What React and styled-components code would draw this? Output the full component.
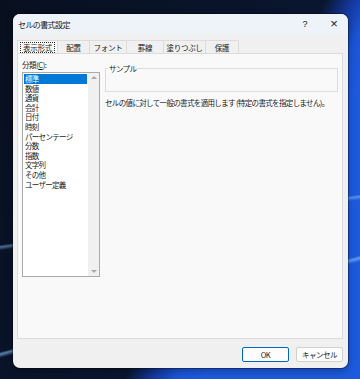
import styled, { createGlobalStyle } from 'styled-components';

const GlobalStyle = createGlobalStyle`
  html, body {
    margin: 0;
    padding: 0;
  }
  body {
    font-family: "Noto Sans CJK JP", "Noto Sans", sans-serif;
  }
`;

// wallpaper: blue base, dark navy laid over the top-left part
const Desktop = styled.div`
  width: 360px;
  height: 379px;
  box-sizing: border-box;
  padding: 14px 12px 11px 13px;
  overflow: hidden;
  background-color: #1d5ade;
  background-image:
    linear-gradient(165deg, transparent 74%, rgba(140, 200, 255, 0.6) 74.5%, transparent 75.3%),
    linear-gradient(172deg, transparent 57%, rgba(140, 200, 255, 0.5) 57.5%, transparent 58.3%),
    linear-gradient(118deg, #08101f 0%, #0a1630 58%, rgba(18, 48, 143, 0.8) 63%, rgba(24, 70, 196, 0.3) 67%, transparent 72%);
`;

const Dialog = styled.div`
  width: 335px;
  height: 354px;
  display: flex;
  flex-direction: column;
  background: #f0f0f0;
  border-radius: 7px;
  overflow: hidden;
  box-shadow: 0 0 0 1px rgba(0, 0, 0, 0.3), 0 3px 8px rgba(0, 0, 0, 0.3);
`;

const TitleBar = styled.div`
  height: 20px;
  flex: none;
  display: flex;
  align-items: center;
  padding: 0 0 0 5px;
  background: #eef2f9;
  color: #1a1a1a;
  font-size: 8px;
  letter-spacing: -0.6px;
`;

const Title = styled.span`
  flex: 1;
`;

const TitleButton = styled.span`
  width: ${p => p.$w}px;
  text-align: center;
  color: #222;
  font-family: "Liberation Sans", sans-serif;
  font-size: ${p => p.$size}px;
  line-height: 20px;
  letter-spacing: 0;
`;

const Body = styled.div`
  flex: 1;
  display: flex;
  flex-direction: column;
  padding: 6px 5px 6px 4px;
`;

const TabRow = styled.div`
  display: flex;
  height: 13px;
  flex: none;
`;

const Tab = styled.div`
  width: ${p => p.$w}px;
  box-sizing: border-box;
  display: flex;
  align-items: center;
  justify-content: center;
  white-space: nowrap;
  font-size: 7.5px;
  letter-spacing: -0.3px;
  color: #1a1a1a;
  background: ${p => (p.$active ? '#f9f9f9' : '#f0f0f0')};
  border: 1px solid #dcdcdc;
  border-bottom: none;
  margin-left: -1px;
  &:first-child {
    margin-left: 0;
  }
`;

const TabLabel = styled.span`
  padding: 0 2px;
  line-height: 9px;
  outline: ${p => (p.$focus ? '1px dotted #333' : 'none')};
`;

const Panel = styled.div`
  flex: 1;
  min-height: 0;
  background: #f9f9f9;
  border: 1px solid #dcdcdc;
  display: flex;
  gap: 5px;
  padding: 6px 4px 0 4px;
`;

const LeftCol = styled.div`
  width: 78px;
  flex: none;
  display: flex;
  flex-direction: column;
`;

const Label = styled.div`
  font-size: 7.5px;
  letter-spacing: -0.4px;
  color: #1a1a1a;
  height: 12px;
  line-height: 10px;
  u {
    text-decoration: underline;
  }
`;

const ListBox = styled.div`
  height: 205px;
  box-sizing: border-box;
  border: 1px solid #a9a9b0;
  background: #fff;
  display: flex;
`;

const Items = styled.div`
  flex: 1;
  padding: 1px 1px 0 1px;
`;

const Item = styled.div`
  height: 9.6px;
  line-height: 9.6px;
  font-size: 7.5px;
  letter-spacing: -0.7px;
  padding-left: 1px;
  white-space: nowrap;
  color: ${p => (p.$selected ? '#fff' : '#1a1a1a')};
  background: ${p => (p.$selected ? '#0078d7' : 'transparent')};
`;

const ScrollBar = styled.div`
  width: 11px;
  background: #f0f0f0;
  display: flex;
  flex-direction: column;
  justify-content: space-between;
  align-items: center;
  padding: 3px 0;
`;

const Arrow = styled.div`
  width: 0;
  height: 0;
  border-left: 3px solid transparent;
  border-right: 3px solid transparent;
  ${p => (p.$up ? 'border-bottom: 3px solid #a8a8a8;' : 'border-top: 3px solid #a8a8a8;')}
`;

const RightCol = styled.div`
  flex: 1;
  min-width: 0;
  display: flex;
  flex-direction: column;
  padding-top: 4px;
`;

const Group = styled.fieldset`
  margin: 0;
  height: 28px;
  box-sizing: border-box;
  border: 1px solid #dcdcdc;
  padding: 0;
`;

const Legend = styled.legend`
  font-size: 7.5px;
  letter-spacing: -0.6px;
  line-height: 9px;
  color: #1a1a1a;
  padding: 0 1px;
  margin-left: 2px;
`;

const Description = styled.div`
  margin-top: 5px;
  font-size: 7.5px;
  color: #1a1a1a;
  white-space: nowrap;
  letter-spacing: -0.65px;
`;

const Footer = styled.div`
  display: flex;
  justify-content: flex-end;
  gap: 7px;
  padding-top: 8px;
`;

const Button = styled.div`
  width: 47px;
  height: 15px;
  box-sizing: border-box;
  display: flex;
  align-items: center;
  justify-content: center;
  background: #fdfdfd;
  border: 1px solid ${p => (p.$primary ? '#0067c0' : '#d0d0d0')};
  border-radius: 2px;
  font-size: 7.5px;
  letter-spacing: -0.5px;
  color: #1a1a1a;
  font-family: "Noto Sans CJK JP", "Liberation Sans", sans-serif;
`;

const tabs = [
  { label: '表示形式', w: 41 },
  { label: '配置', w: 33 },
  { label: 'フォント', w: 38 },
  { label: '罫線', w: 38 },
  { label: '塗りつぶし', w: 43 },
  { label: '保護', w: 34 }
];

const categories = [
  '標準', '数値', '通貨', '会計', '日付', '時刻',
  'パーセンテージ', '分数', '指数', '文字列', 'その他', 'ユーザー定義'
];

const App = () => (
  <Desktop>
    <GlobalStyle />
    <Dialog>
      <TitleBar>
        <Title>セルの書式設定</Title>
        <TitleButton $w={30} $size={9}>?</TitleButton>
        <TitleButton $w={28} $size={13}>×</TitleButton>
      </TitleBar>
      <Body>
        <TabRow>
          {tabs.map((tab, i) => (
            <Tab key={tab.label} $w={tab.w} $active={i === 0}>
              <TabLabel $focus={i === 0}>{tab.label}</TabLabel>
            </Tab>
          ))}
        </TabRow>
        <Panel>
          <LeftCol>
            <Label>分類(<u>C</u>):</Label>
            <ListBox>
              <Items>
                {categories.map((c, i) => (
                  <Item key={c} $selected={i === 0}>{c}</Item>
                ))}
              </Items>
              <ScrollBar>
                <Arrow $up />
                <Arrow />
              </ScrollBar>
            </ListBox>
          </LeftCol>
          <RightCol>
            <Group>
              <Legend>サンプル</Legend>
            </Group>
            <Description>セルの値に対して一般の書式を適用します (特定の書式を指定しません)。</Description>
          </RightCol>
        </Panel>
        <Footer>
          <Button $primary>OK</Button>
          <Button>キャンセル</Button>
        </Footer>
      </Body>
    </Dialog>
  </Desktop>
);

export default App;
